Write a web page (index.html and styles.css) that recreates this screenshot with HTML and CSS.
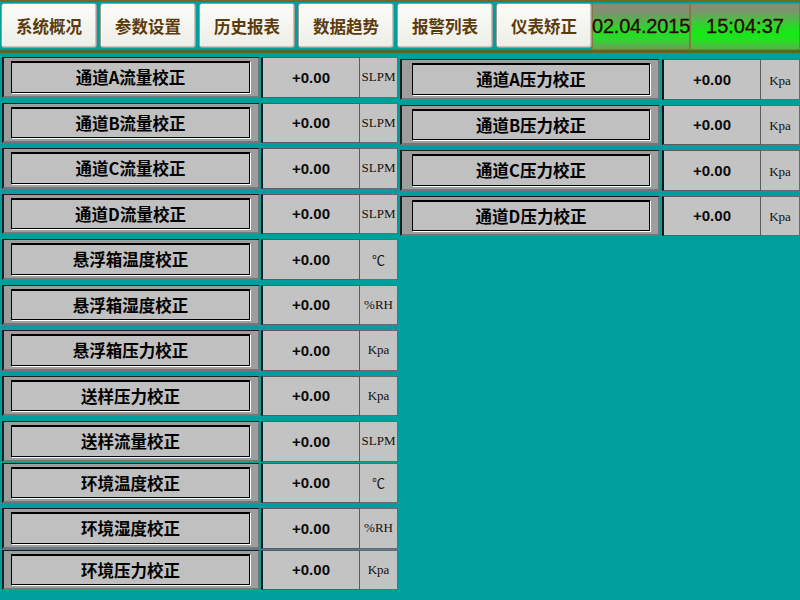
FILE: index.html
```html
<!DOCTYPE html>
<html lang="zh-CN">
<head>
<meta charset="utf-8">
<title>仪表矫正</title>
<link rel="stylesheet" href="styles.css">
</head>
<body>
<div class="header">
  <div class="tab">系统概况</div>
  <div class="tab">参数设置</div>
  <div class="tab">历史报表</div>
  <div class="tab">数据趋势</div>
  <div class="tab">报警列表</div>
  <div class="tab tab--last">仪表矫正</div>
  <div class="clock clock--date">02.04.2015</div>
  <div class="clock clock--time">15:04:37</div>
</div>
<div class="main">
  <div class="col col--left">
    <div class="row"><div class="btn"><div class="face">通道A流量校正</div></div><div class="val">+0.00</div><div class="unit">SLPM</div></div>
    <div class="row"><div class="btn"><div class="face">通道B流量校正</div></div><div class="val">+0.00</div><div class="unit">SLPM</div></div>
    <div class="row"><div class="btn"><div class="face">通道C流量校正</div></div><div class="val">+0.00</div><div class="unit">SLPM</div></div>
    <div class="row"><div class="btn"><div class="face">通道D流量校正</div></div><div class="val">+0.00</div><div class="unit">SLPM</div></div>
    <div class="row"><div class="btn"><div class="face">悬浮箱温度校正</div></div><div class="val">+0.00</div><div class="unit">℃</div></div>
    <div class="row"><div class="btn"><div class="face">悬浮箱湿度校正</div></div><div class="val">+0.00</div><div class="unit">%RH</div></div>
    <div class="row"><div class="btn"><div class="face">悬浮箱压力校正</div></div><div class="val">+0.00</div><div class="unit">Kpa</div></div>
    <div class="row"><div class="btn"><div class="face">送样压力校正</div></div><div class="val">+0.00</div><div class="unit">Kpa</div></div>
    <div class="row"><div class="btn"><div class="face">送样流量校正</div></div><div class="val">+0.00</div><div class="unit">SLPM</div></div>
    <div class="row row--tight"><div class="btn"><div class="face">环境温度校正</div></div><div class="val">+0.00</div><div class="unit">℃</div></div>
    <div class="row"><div class="btn"><div class="face">环境湿度校正</div></div><div class="val">+0.00</div><div class="unit">%RH</div></div>
    <div class="row row--tight"><div class="btn"><div class="face">环境压力校正</div></div><div class="val">+0.00</div><div class="unit">Kpa</div></div>
  </div>
  <div class="col col--right">
    <div class="row"><div class="btn"><div class="face">通道A压力校正</div></div><div class="val">+0.00</div><div class="unit">Kpa</div></div>
    <div class="row"><div class="btn"><div class="face">通道B压力校正</div></div><div class="val">+0.00</div><div class="unit">Kpa</div></div>
    <div class="row"><div class="btn"><div class="face">通道C压力校正</div></div><div class="val">+0.00</div><div class="unit">Kpa</div></div>
    <div class="row"><div class="btn"><div class="face">通道D压力校正</div></div><div class="val">+0.00</div><div class="unit">Kpa</div></div>
  </div>
</div>
</body>
</html>
```
FILE: styles.css
```css
html, body {
  margin: 0;
  padding: 0;
}
body {
  width: 800px;
  height: 600px;
  overflow: hidden;
  background: #009e9c;
  font-family: "Noto Sans CJK SC", sans-serif;
}

/* ---------- header ---------- */
.header {
  display: flex;
  align-items: flex-start;
  height: 53px;
  box-sizing: border-box;
  padding: 1px 0 2px 1px;
  background: #009e9c;
  border-top: 2px solid #756726;
  border-bottom: 3px solid #586829;
}
.tab {
  width: 96px;
  height: 45px;
  margin-right: 3px;
  box-sizing: border-box;
  border: 1px solid #9c9c92;
  border-radius: 3px;
  background: linear-gradient(#fbfbf8, #eeeee8);
  box-shadow: inset 1px 1px 0 #ffffff, inset -1px -1px 0 #c6c6be;
  display: flex;
  align-items: center;
  justify-content: center;
  font-size: 16.5px;
  font-weight: 700;
  color: #5b3b0c;
}
.tab--last {
  margin-right: 0;
}
.clock {
  height: 47px;
  box-sizing: border-box;
  border: 1px solid #847944;
  display: flex;
  align-items: center;
  justify-content: center;
  font-family: "Liberation Sans", Arial, sans-serif;
  font-size: 20px;
  color: #2a0800;
  -webkit-text-stroke: 0.3px #2a0800;
  background: linear-gradient(180deg, #8a8b78 0%, #7f9070 18%, #3fc43a 45%, #1fe01f 62%, #38d034 82%, #6c9c5c 100%);
}
.clock--date {
  width: 98px;
  letter-spacing: -0.2px;
}
.clock--time {
  flex: 1;
  background: linear-gradient(180deg, #8a8b78 0%, #78986a 18%, #33d030 45%, #15e815 62%, #25e020 82%, #5cb050 100%);
}

/* ---------- main grid ---------- */
.main {
  display: flex;
  gap: 2px;
  padding: 4px 0 0 2px;
}
.col {
  display: flex;
  flex-direction: column;
}
.col--left {
  width: 396px;
}
.col--right {
  width: 400px;
  padding-top: 2px;
}
.row {
  display: flex;
  height: 40.5px;
  margin-top: 5px;
}
.row:first-child {
  margin-top: 0;
}
.row--tight {
  margin-top: 1px;
}

/* bevelled button */
.btn {
  width: 258px;
  box-sizing: border-box;
  background: #9e9e9e;
  border-top: 1px solid #1e1e1e;
  border-left: 2px solid #1e1e1e;
  border-right: 2px solid #747474;
  border-bottom: 2px solid #767676;
  padding: 3px 7px 2px 7px;
  display: flex;
}
.col--right .btn {
  width: 260px;
  padding-left: 10px;
}
.face {
  flex: 1;
  box-sizing: border-box;
  background: #c0c0c0;
  border: 1px solid #000;
  border-top-width: 2px;
  box-shadow: 1px 1px 0 #ffffff;
  margin: 0 1px 1px 0;
  display: flex;
  align-items: center;
  justify-content: center;
  font-size: 16.5px;
  font-weight: 700;
  color: #000;
}

.val {
  width: 99px;
  margin-left: 1px;
  box-sizing: border-box;
  background: #c3c3c3;
  border: 1px solid #5c5c5c;
  border-left: 2px solid #141414;
  display: flex;
  align-items: center;
  justify-content: center;
  font-family: "Liberation Sans", Arial, sans-serif;
  font-size: 15px;
  font-weight: 700;
  color: #0a0a0a;
}
.col--right .val {
  margin-left: 2px;
}
.unit {
  width: 38px;
  box-sizing: border-box;
  background: #c3c3c3;
  border: 1px solid #6a6a6a;
  border-left: none;
  display: flex;
  align-items: center;
  justify-content: center;
  font-family: "Liberation Serif", "Noto Sans CJK SC", serif;
  font-size: 13px;
  color: #111;
}
.col--right .unit {
  width: 39px;
  padding-top: 3px;
}
```
